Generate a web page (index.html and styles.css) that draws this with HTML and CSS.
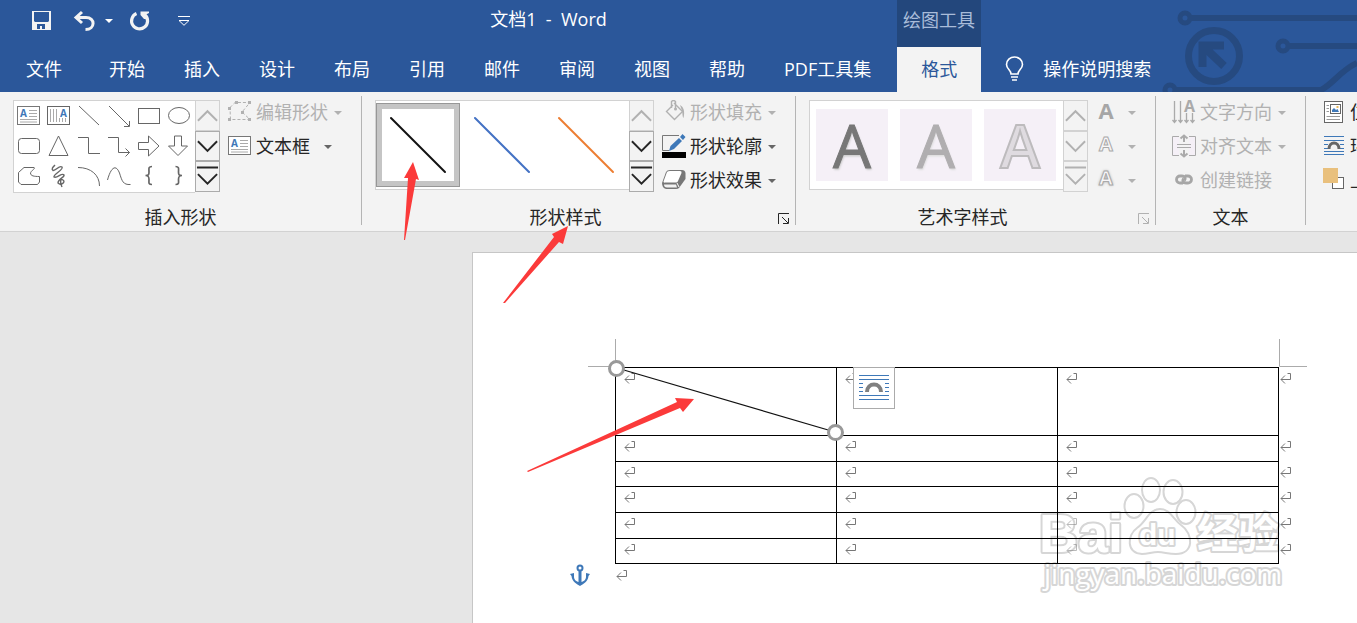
FILE: index.html
```html
<!DOCTYPE html>
<html lang="zh-CN">
<head>
  <meta charset="UTF-8" />
  <meta name="viewport" content="width=device-width, initial-scale=1.0"/>
  <title>文档1 - Word</title>
  <link rel="stylesheet" href="styles.css">
</head>
<body>
  <!-- shared symbols -->
  <svg class="sprite" aria-hidden="true">
    <symbol id="caret" viewBox="0 0 8 4"><path d="M0 0H8L4 4z" fill="currentColor"/></symbol>
    <symbol id="up" viewBox="0 0 24 30"><path d="M2 20L12 10L22 20" fill="none" stroke="currentColor" stroke-width="2"/></symbol>
    <symbol id="down" viewBox="0 0 24 30"><path d="M2 9L12 19L22 9" fill="none" stroke="currentColor" stroke-width="2"/></symbol>
    <symbol id="more" viewBox="0 0 24 30"><path d="M1 5H23M2 12L12 22L22 12" fill="none" stroke="currentColor" stroke-width="2"/></symbol>
    <symbol id="ret" viewBox="0 0 12 12"><path d="M7.500 1.500H10.500V7.500H1M5 3.500L1 7.500L5 11.500" fill="none" stroke="#777"/></symbol>
    <symbol id="launch" viewBox="0 0 12 12"><path d="M.5 11V.5H11M4 4L10 10M10.500 5V10.500H5" fill="none" stroke="currentColor"/></symbol>
    <symbol id="page-lines" viewBox="0 0 24 24">
      <rect x=".5" y="2.500" width="22" height="18" fill="#fff" stroke="#777"/>
      <path d="M12 6.500H20M12 9.500H20M12 12.500H20M3 15.500H20M3 18H20" stroke="#aaa"/>
    </symbol>
  </svg>

  <header class="header">
    <svg class="circuit" viewBox="0 0 200 92" aria-hidden="true">
      <g fill="none" stroke="#264a80" stroke-width="6">
        <circle cx="28" cy="18" r="5" stroke-width="5"/><path d="M33 18H200"/>
        <circle cx="126" cy="46" r="5" stroke-width="5"/><path d="M131 46H200"/>
        <circle cx="57" cy="56" r="25.500" stroke-width="7"/>
        <path d="M45.500 67V45.500H67M47 47L67 66" stroke-width="8"/>
        <circle cx="13" cy="90" r="5" stroke-width="5"/><path d="M18 90H164C176 84 184 70 200 63"/>
      </g>
    </svg>

    <div class="titlebar">
      <div class="quick">
        <button class="quick-btn" aria-label="保存">
          <svg width="20" height="20" viewBox="0 0 20 20"><path fill="#f3f3f3" fill-rule="evenodd" d="M0 0H19V19H0zM2 1V10L3 11H16L17 10V1zM5 13V18H8V15H10V18H13V13z"/></svg>
        </button>
        <button class="quick-btn undo" aria-label="撤消">
          <svg width="24" height="22" viewBox="0 0 24 22"><path d="M10 2L4 7.500L10 13M4 7.500H14C23.500 7.500 23.500 19.500 13.500 19.500" fill="none" stroke="#f3f3f3" stroke-width="3"/></svg>
          <svg class="caret" width="8" height="4"><use href="#caret"/></svg>
        </button>
        <button class="quick-btn redo" aria-label="重复">
          <svg width="22" height="22" viewBox="0 0 22 22"><path d="M7.500 3.500A8 8 0 1 0 16 5" fill="none" stroke="#f3f3f3" stroke-width="3.200"/><path d="M11.500 1.500H20V3L17 4.500V9H15L11.500 5z" fill="#f3f3f3"/></svg>
        </button>
        <button class="quick-btn custom" aria-label="自定义快速访问工具栏">
          <svg width="12" height="10" viewBox="0 0 12 10"><path d="M0 .5H12M1 4.500H11L6 9.300z" fill="none" stroke="#fff"/></svg>
        </button>
      </div>
      <h1 class="title">文档1&nbsp; -&nbsp; Word</h1>
      <div class="context">绘图工具</div>
    </div>

    <nav class="tabs">
      <button class="tab file">文件</button>
      <button class="tab">开始</button>
      <button class="tab">插入</button>
      <button class="tab">设计</button>
      <button class="tab">布局</button>
      <button class="tab">引用</button>
      <button class="tab">邮件</button>
      <button class="tab">审阅</button>
      <button class="tab">视图</button>
      <button class="tab">帮助</button>
      <button class="tab">PDF工具集</button>
      <button class="tab active">格式</button>
      <button class="tell">
        <svg width="20" height="26" viewBox="0 0 20 26"><path d="M6 18C6 14 1.500 13 1.500 8.500A8 7.500 0 0 1 17.500 8.500C17.500 13 13 14 13 18zM6 21H13M7 24H12" fill="none" stroke="#fff" stroke-width="1.600"/></svg>
        操作说明搜索
      </button>
    </nav>
  </header>

  <section class="ribbon">
    <div class="group g-insert">
      <div class="group-body">
        <div class="gallery">
          <div class="shapes">
            <button class="shape" aria-label="文本框"><svg viewBox="0 0 24 24"><use href="#page-lines"/><text x="3" y="13" class="mini-a">A</text></svg></button>
            <button class="shape" aria-label="竖排文本框"><svg viewBox="0 0 24 24"><rect x=".5" y="2.500" width="22" height="18"/><path d="M3.500 5V18M6.500 5V18M9.500 5V18M12.500 14V18M15.500 14V18M18.500 14V18" stroke="#aaa"/><text x="13" y="13" class="mini-a">A</text></svg></button>
            <button class="shape" aria-label="直线"><svg viewBox="0 0 24 24"><path d="M2 2L22 21"/></svg></button>
            <button class="shape" aria-label="箭头"><svg viewBox="0 0 24 24"><path d="M2 2L22 22M22.500 17V22.500H17"/></svg></button>
            <button class="shape" aria-label="矩形"><svg viewBox="0 0 24 24"><rect x="1.500" y="4.500" width="21" height="15"/></svg></button>
            <button class="shape" aria-label="椭圆"><svg viewBox="0 0 24 24"><ellipse cx="12" cy="11.500" rx="10.500" ry="8"/></svg></button>
            <button class="shape" aria-label="圆角矩形"><svg viewBox="0 0 24 24"><rect x="1.500" y="4.500" width="21" height="15" rx="3"/></svg></button>
            <button class="shape" aria-label="三角形"><svg viewBox="0 0 24 24"><path d="M11.500 2L21 21.500H2z"/></svg></button>
            <button class="shape" aria-label="肘形连接符"><svg viewBox="0 0 24 24"><path d="M1 3.500H11.500V19.500H23"/></svg></button>
            <button class="shape" aria-label="肘形箭头"><svg viewBox="0 0 24 24"><path d="M1 3.500H11.500V18.500H22.500M18.500 14.500L22.500 18.500L18.500 22.500"/></svg></button>
            <button class="shape" aria-label="右箭头"><svg viewBox="0 0 24 24"><path d="M1.500 8.500H11.500V2L22 12L11.500 22V15.500H1.500z"/></svg></button>
            <button class="shape" aria-label="下箭头"><svg viewBox="0 0 24 24"><path d="M7.500 2H14.500V12H20.500L11 21.500L1.500 12H7.500z"/></svg></button>
            <button class="shape" aria-label="任意多边形"><svg viewBox="0 0 24 24"><path d="M1.500 8.500L7 3.500H17C19 4.500 14.500 6 13.500 9C13.500 12 17 12.500 22.500 12.500V18L20.500 20.500H4L1.500 18z"/></svg></button>
            <button class="shape" aria-label="自由曲线"><svg viewBox="0 0 24 24"><path d="M8 1C6 3 4 5 6 6.500C9 7 12 1 15 3C17 6 6 10 7 13C10 15 15 8 17 11C18 13 11 15 11 19C14 22 19 18 16 16C13 14 13 19 15 23" stroke-width="1.400"/></svg></button>
            <button class="shape" aria-label="弧形"><svg viewBox="0 0 24 24"><path d="M1 3.500C14 3.500 22.500 11 22.500 22"/></svg></button>
            <button class="shape" aria-label="曲线"><svg viewBox="0 0 24 24"><path d="M.5 16C4 3 9 0 12.500 9C15 17 16 21 23.500 20.500"/></svg></button>
            <button class="shape" aria-label="左大括号"><svg viewBox="0 0 24 24"><path d="M15 2.500C11 2.500 12 5 12 8S11.500 11.500 8.500 11.500C11.500 11.500 12 12.500 12 15.500S11 20.500 15 20.500" stroke-width="1.700"/></svg></button>
            <button class="shape" aria-label="右大括号"><svg viewBox="0 0 24 24"><path d="M8.500 2.500C12.500 2.500 11.500 5 11.500 8S12 11.500 15 11.500C12 11.500 11.500 12.500 11.500 15.500S12.500 20.500 8.500 20.500" stroke-width="1.700"/></svg></button>
          </div>
          <div class="scroll">
            <button class="off" aria-label="上一行"><svg><use href="#up"/></svg></button>
            <button aria-label="下一行"><svg><use href="#down"/></svg></button>
            <button aria-label="其他"><svg><use href="#more"/></svg></button>
          </div>
        </div>
        <div class="commands">
          <button class="cmd" disabled>
            <svg width="24" height="24" viewBox="0 0 24 24"><path d="M2 7.500L7 2.500H22L14 12L22 19.500H2.500z" fill="none" stroke="#b1b1b1" stroke-dasharray="3 2"/><path d="M0 7H3V10H0zM7 1H10V4H7zM20 1H23V4H20zM13 11H16V14H13zM0 18H3V21H0zM20 18H23V21H20z" fill="#b1b1b1"/></svg>
            编辑形状 <svg class="caret"><use href="#caret"/></svg>
          </button>
          <button class="cmd wide">
            <svg width="24" height="24" viewBox="0 0 24 24"><use href="#page-lines"/><text x="3" y="13" class="mini-a">A</text></svg>
            文本框 <svg class="caret"><use href="#caret"/></svg>
          </button>
        </div>
      </div>
      <div class="group-foot"><span>插入形状</span></div>
    </div>

    <div class="group g-style">
      <div class="group-body">
        <div class="gallery">
          <div class="styles">
            <button class="line-style selected black" aria-label="细线 深色"><svg viewBox="0 0 72 72"><path d="M9 9L63 63"/></svg></button>
            <button class="line-style blue" aria-label="细线 蓝色"><svg viewBox="0 0 72 72"><path d="M9 9L63 63"/></svg></button>
            <button class="line-style orange" aria-label="细线 橙色"><svg viewBox="0 0 72 72"><path d="M9 9L63 63"/></svg></button>
          </div>
          <div class="scroll">
            <button class="off" aria-label="上一行"><svg><use href="#up"/></svg></button>
            <button aria-label="下一行"><svg><use href="#down"/></svg></button>
            <button aria-label="其他"><svg><use href="#more"/></svg></button>
          </div>
        </div>
        <div class="commands">
          <button class="cmd" disabled>
            <svg width="24" height="24" viewBox="0 0 24 24"><path d="M12 3L20.500 11.500L12.500 19.500L4.500 11.500L11 5M9.500 8V1.500Q11.500 -.5 13.500 1.500V9" fill="none" stroke="#b1b1b1" stroke-width="1.400"/><path d="M18 5C22 7 23 12 21.500 18C20 16 21 12 19 8z" fill="#b1b1b1"/><circle cx="13.500" cy="9" r="1.500" fill="#b1b1b1"/></svg>
            形状填充 <svg class="caret"><use href="#caret"/></svg>
          </button>
          <button class="cmd">
            <svg width="24" height="24" viewBox="0 0 24 24"><path d="M17 1.500H.5V16.500H7" fill="none" stroke="#777"/><path d="M0 18H24V24H0z"/><path d="M7 17L8.500 12L17 4L20 7L12 15zM18 3L20.500 0L23.500 3L21 6z" fill="#3e78b8"/></svg>
            形状轮廓 <svg class="caret"><use href="#caret"/></svg>
          </button>
          <button class="cmd">
            <svg width="24" height="24" viewBox="0 0 24 24"><path d="M0 15L4 4Q5 2 8 2H20Q23 2 23.500 5V11L17 20Q16 21 14 21H4Q0 20 0 15z" fill="#777"/><path d="M1.500 13.500L5 4Q6 3 8 3H18Q20 3 19.500 5L16 13Q15.500 14.500 14 14.500H3Q1.500 15 1.500 13.500z" fill="#fff"/><path d="M2 16.500H14L15 19.500H5Q2 19.500 2 16.500z" fill="#f3f3f3"/><path d="M15 15L17 19" stroke="#fff"/></svg>
            形状效果 <svg class="caret"><use href="#caret"/></svg>
          </button>
        </div>
      </div>
      <div class="group-foot"><span>形状样式</span><button class="launcher" aria-label="设置形状格式"><svg width="12" height="12"><use href="#launch"/></svg></button></div>
    </div>

    <div class="group g-art">
      <div class="group-body">
        <div class="gallery">
          <div class="arts">
            <button class="art art-dark">A</button>
            <button class="art art-light">A</button>
            <button class="art art-outline">A</button>
          </div>
          <div class="scroll">
            <button class="off" aria-label="上一行"><svg><use href="#up"/></svg></button>
            <button class="off" aria-label="下一行"><svg><use href="#down"/></svg></button>
            <button class="off" aria-label="其他"><svg><use href="#more"/></svg></button>
          </div>
        </div>
        <div class="commands">
          <button class="cmd letter" disabled aria-label="文本填充"><span class="a-fill">A</span><svg class="caret"><use href="#caret"/></svg></button>
          <button class="cmd letter" disabled aria-label="文本轮廓"><span class="a-line">A</span><svg class="caret"><use href="#caret"/></svg></button>
          <button class="cmd letter" disabled aria-label="文本效果"><span class="a-glow">A</span><svg class="caret"><use href="#caret"/></svg></button>
        </div>
      </div>
      <div class="group-foot"><span>艺术字样式</span><button class="launcher off" aria-label="设置文本效果格式"><svg width="12" height="12"><use href="#launch"/></svg></button></div>
    </div>

    <div class="group g-text">
      <div class="group-body">
        <div class="commands">
          <button class="cmd" disabled>
            <svg class="dir" width="24" height="24" viewBox="0 0 24 24"><path d="M2.500 1V22M8.500 1V22M14.500 13V22M20.500 13V22M.5 20L2.500 22.500L4.500 20M6.500 20L8.500 22.500L10.500 20M12.500 20L14.500 22.500L16.500 20M18.500 20L20.500 22.500L22.500 20" fill="none" stroke="#aaa" stroke-width="1.300"/><text x="12" y="12" class="dir-a">A</text></svg>
            文字方向 <svg class="caret"><use href="#caret"/></svg>
          </button>
          <button class="cmd" disabled>
            <svg width="24" height="24" viewBox="0 0 24 24"><path d="M7 2.500H.5V21.500H7M17 2.500H23.500V21.500H17" fill="#f5f0f7" stroke="#aaa"/><path d="M5 10.500H19M5 13.500H19" stroke="#aaa"/><path d="M12 8V2M12 16V22M8.500 4.500L12 1.500L15.500 4.500M8.500 19.500L12 22.500L15.500 19.500" fill="none" stroke="#aaa" stroke-width="2"/></svg>
            对齐文本 <svg class="caret"><use href="#caret"/></svg>
          </button>
          <button class="cmd" disabled>
            <svg width="24" height="24" viewBox="0 0 24 24"><path d="M11 15H8A3.500 3.500 0 0 1 8 8H10C13 8 14 10.500 12.500 12.500M13 8H16A3.500 3.500 0 0 1 16 15H14C11 15 10 12.500 11.500 10.500" fill="none" stroke="#a6a6a6" stroke-width="2.800"/></svg>
            创建链接
          </button>
        </div>
      </div>
      <div class="group-foot"><span>文本</span></div>
    </div>

    <div class="group g-arrange">
      <div class="group-body">
        <div class="commands">
          <button class="cmd">
            <svg width="24" height="24" viewBox="0 0 24 24"><rect x="2.500" y="1.500" width="18" height="21" fill="#fff" stroke="#666"/><rect x="8.500" y="4.500" width="10" height="9" fill="#fff" stroke="#666"/><path d="M10 12V10L12 8L14 10L15.500 9L17 12z" fill="#3e78b8"/><path d="M14.500 6H16.500V8H14.500z" fill="#e9b95b"/><path d="M4.500 5.500H7M4.500 8.500H7M4.500 11.500H7M4.500 16.500H18M4.500 19.500H18" stroke="#999"/></svg>
            位置
          </button>
          <button class="cmd">
            <svg width="24" height="24" viewBox="0 0 24 24"><path d="M2 2.500H22M2 6.500H22M2 10.500H6M18 10.500H22M2 14.500H6M18 14.500H22M2 17.500H22M2 20.500H22" stroke="#3e78b8"/><path d="M7 15C7 7 17 7 17 15" fill="none" stroke="#666" stroke-width="3"/></svg>
            环绕文字
          </button>
          <button class="cmd">
            <svg width="24" height="24" viewBox="0 0 24 24"><rect x="10.500" y="9.500" width="11" height="11" fill="#fff" stroke="#666"/><path d="M1 0H16V15H1z" fill="#e9c07d"/></svg>
            上移一层
          </button>
        </div>
      </div>
    </div>
  </section>

  <main class="workspace">
    <div class="page">
      <svg class="watermark" viewBox="0 0 250 125" aria-hidden="true">
        <ellipse cx="98" cy="32" rx="9.500" ry="12"/>
        <ellipse cx="115" cy="16" rx="9" ry="12"/>
        <ellipse cx="137" cy="18" rx="9.500" ry="12"/>
        <ellipse cx="150" cy="38" rx="9.500" ry="12"/>
        <path d="M124 35C134 35 137 45 145 51C158 60 158 80 140 80C132 80 128 78 122 78C116 78 112 80 106 80C90 79 91 61 101 54C110 48 113 35 124 35z"/>
        <text x="3" y="78" class="wm-big">Bai</text>
        <text x="103" y="71" class="wm-du">du</text>
        <text x="161" y="74" class="wm-cn">经验</text>
        <text x="8" y="110" class="wm-url">jingyan.baidu.com</text>
      </svg>

      <div class="table-wrap">
        <table class="grid">
          <tr class="tall"><td><svg class="ret"><use href="#ret"/></svg></td><td><svg class="ret"><use href="#ret"/></svg></td><td><svg class="ret"><use href="#ret"/></svg></td><td class="end"><svg class="ret"><use href="#ret"/></svg></td></tr>
          <tr><td><svg class="ret"><use href="#ret"/></svg></td><td><svg class="ret"><use href="#ret"/></svg></td><td><svg class="ret"><use href="#ret"/></svg></td><td class="end"><svg class="ret"><use href="#ret"/></svg></td></tr>
          <tr class="short"><td><svg class="ret"><use href="#ret"/></svg></td><td><svg class="ret"><use href="#ret"/></svg></td><td><svg class="ret"><use href="#ret"/></svg></td><td class="end"><svg class="ret"><use href="#ret"/></svg></td></tr>
          <tr><td><svg class="ret"><use href="#ret"/></svg></td><td><svg class="ret"><use href="#ret"/></svg></td><td><svg class="ret"><use href="#ret"/></svg></td><td class="end"><svg class="ret"><use href="#ret"/></svg></td></tr>
          <tr><td><svg class="ret"><use href="#ret"/></svg></td><td><svg class="ret"><use href="#ret"/></svg></td><td><svg class="ret faded"><use href="#ret"/></svg></td><td class="end"><svg class="ret"><use href="#ret"/></svg></td></tr>
          <tr class="short"><td><svg class="ret"><use href="#ret"/></svg></td><td><svg class="ret"><use href="#ret"/></svg></td><td><svg class="ret faded"><use href="#ret"/></svg></td><td class="end"><svg class="ret"><use href="#ret"/></svg></td></tr>
        </table>

        <!-- margin corners and the selected diagonal line -->
        <svg class="drawing" viewBox="0 0 720 110" aria-hidden="true">
          <path d="M27.500 0V27.500H0M691.500 0V27.500H719" fill="none" stroke="#ababab"/>
          <path d="M29 29L247 93" stroke="#111" stroke-width="1.300"/>
          <circle cx="28.500" cy="29.500" r="7" fill="#fff" stroke="#999" stroke-width="3"/>
          <circle cx="247.500" cy="93.500" r="7" fill="#fff" stroke="#999" stroke-width="3"/>
        </svg>
        <button class="layout-options" aria-label="布局选项">
          <svg width="30" height="28" viewBox="0 0 30 28"><path d="M0 1.500H30M0 5.500H30M0 9.500H4M26 9.500H30M0 13.500H4M26 13.500H30M0 17.500H4M26 17.500H30M0 21.500H30M0 25.500H30" stroke="#3e78b8"/><path d="M8 18C8 8 22 8 22 18" fill="none" stroke="#808080" stroke-width="4"/></svg>
        </button>
      </div>
      <div class="last-line">
        <svg class="anchor" width="20" height="22" viewBox="0 0 20 22"><circle cx="10" cy="4" r="2.500" fill="none" stroke="#3e78b8" stroke-width="2"/><path d="M8.500 6H11.500V18H8.500z" fill="#3e78b8"/><path d="M0 10L4 9V13C4 16 7 18 10 18S16 16 16 13V9L20 10L18.500 12C18 18 13 20 10 22C7 20 2 18 1.500 12z" fill="#3e78b8"/></svg>
        <svg class="ret"><use href="#ret"/></svg>
      </div>
    </div>
  </main>

  <!-- tutorial arrows -->
  <svg class="arrows" viewBox="0 0 700 480" aria-hidden="true">
    <path d="M413 162L419 180L416 179L405 240H404L408 178L404 178z"/>
    <path d="M568 226L563 244L559 242L505 303L503 303L554 237L552 234z"/>
    <path d="M694 399L683 412L680 408L528 472L527 471L677 402L675 398z"/>
  </svg>
</body>
</html>
```
FILE: styles.css
```css
* {
  box-sizing: border-box;
}

body {
  margin: 0;
  position: relative;
  display: flex;
  flex-direction: column;
  height: 100vh;
  overflow: hidden;
  background: #e6e6e6;
  color: #262626;
  font-family: "Open Sans", "Noto Sans CJK SC", sans-serif;
  font-size: 18px;
  line-height: 24px;
}

button {
  margin: 0;
  padding: 0;
  border: none;
  background: none;
  color: inherit;
  font: inherit;
  white-space: nowrap;
}

svg {
  display: block;
  flex: none;
}

.sprite {
  position: absolute;
  width: 0;
  height: 0;
}

.mini-a {
  font-size: 10px;
  font-weight: bold;
  fill: #3e78b8;
  stroke: none;
}

.dir {
  overflow: visible;
}

.dir-a {
  font-size: 16px;
  font-weight: bold;
  fill: #aaa;
}

.caret {
  width: 8px;
  height: 4px;
}

/* header */
.header {
  position: relative;
  flex: none;
  background: #2b579a;
  color: #fff;
}

.circuit {
  position: absolute;
  top: 0;
  right: 0;
  width: 200px;
  height: 92px;
}

.titlebar {
  display: grid;
  grid-template-columns: 200px 697px 84px;
  height: 47px;
}

.quick {
  display: flex;
  align-items: center;
  padding-left: 32px;
  height: 42px;
}

.quick-btn {
  display: flex;
  align-items: center;
}

.undo {
  gap: 9px;
  margin-left: 20px;
}

.redo {
  margin-left: 16px;
}

.custom {
  margin-left: 27px;
}

.title {
  margin: 0;
  font-size: 18px;
  font-weight: normal;
  line-height: 38px;
  text-align: center;
}

.context {
  background: #23477c;
  color: #a9bcd9;
  line-height: 40px;
  text-align: center;
}

.tabs {
  display: flex;
  height: 45px;
}

.tab {
  padding: 0 19px 2px;
  margin-right: 1px;
}

.file {
  width: 89px;
  padding-left: 26px;
  text-align: left;
}

.active {
  width: 84px;
  margin: 0 0 0 6px;
  background: #f3f3f3;
  color: #2b579a;
}

.tell {
  display: flex;
  align-items: center;
  gap: 18px;
  padding: 0 0 2px 24px;
}

/* ribbon */
.ribbon {
  display: flex;
  flex: none;
  height: 140px;
  padding: 4px 0 6px;
  overflow: hidden;
  border-bottom: 1px solid #d2d2d2;
  background: #f3f3f3;
}

.group {
  display: flex;
  flex: none;
  flex-direction: column;
  justify-content: space-between;
  border-right: 1px solid #b4b4b4;
}

.g-insert {
  width: 362px;
  padding-left: 13px;
}

.g-style {
  width: 434px;
  padding-left: 13px;
}

.g-art {
  width: 360px;
  padding-left: 13px;
}

.g-text {
  width: 150px;
  padding-left: 16px;
}

.g-arrange {
  padding-left: 16px;
  border-right: none;
}

.group-body {
  display: flex;
  gap: 8px;
}

.group-foot {
  display: flex;
  align-items: center;
  height: 16px;
  margin-left: -13px;
}

.g-text .group-foot {
  margin-left: -16px;
}

.group-foot span {
  flex: 1;
  text-align: center;
}

.launcher {
  width: 26px;
  padding: 4px 0 0 9px;
}

.launcher.off {
  color: #b1b1b1;
}

.gallery {
  display: flex;
  align-self: flex-start;
  margin-top: 4px;
}

.shapes {
  display: grid;
  grid-template-columns: repeat(6, 30px);
  grid-template-rows: repeat(3, 30px);
  padding: 0 1px 1px 0;
  border: 1px solid #d2d2d2;
  border-right: none;
  background: #fff;
}

.shape {
  display: flex;
  align-items: center;
  justify-content: center;
}

.shape svg {
  width: 24px;
  height: 24px;
  fill: none;
  stroke: #666;
}

.scroll {
  display: flex;
  flex-direction: column;
  width: 25px;
  height: 92px;
}

.scroll button {
  flex: 1;
  border: 1px solid #ababab;
  overflow: hidden;
}

.scroll .off {
  border-color: #d2d2d2;
  color: #b1b1b1;
}

.scroll svg {
  width: 23px;
  height: 30px;
}

.commands {
  display: flex;
  flex-direction: column;
  align-items: flex-start;
}

.cmd {
  display: flex;
  align-items: center;
  gap: 4px;
  height: 34px;
  padding-bottom: 2px;
}

.cmd .caret {
  margin: 2px 0 0 2px;
  color: #666;
}

.cmd.wide .caret {
  margin-left: 10px;
}

.cmd:disabled,
.cmd:disabled .caret {
  color: #b1b1b1;
}

.styles {
  display: flex;
  height: 90px;
  padding: 2px 1px 0 0;
  border: 1px solid #d2d2d2;
  border-right: none;
  background: #fff;
}

.line-style {
  width: 84px;
  height: 84px;
  padding: 6px;
}

.line-style.selected {
  padding: 0;
  border: 1px solid #979797;
  background: #fff;
  box-shadow: inset 0 0 0 5px #c5c5c5;
}

.line-style svg {
  width: 72px;
  height: 72px;
  margin: auto;
  fill: none;
  stroke-width: 2;
  stroke-linecap: round;
}

.black svg {
  stroke: #111;
}

.blue svg {
  stroke: #4472c4;
}

.orange svg {
  stroke: #ed7d31;
}

.arts {
  display: flex;
  gap: 12px;
  height: 90px;
  padding: 8px 7px 8px 6px;
  border: 1px solid #d2d2d2;
  border-right: none;
  background: #fff;
}

.art {
  width: 72px;
  height: 72px;
  background: #f5f0f7;
  font-size: 60px;
  line-height: 72px;
}

.art-dark {
  color: #777;
  -webkit-text-stroke: 1px #777;
  text-shadow: 1px 2px 2px #ccc;
}

.art-light {
  color: #b0aeb0;
  -webkit-text-stroke: 1px #b0aeb0;
  text-shadow: 1px 2px 2px #ddd;
}

.art-outline {
  color: #dfdbe0;
  font-weight: 600;
  -webkit-text-stroke: 2px #bdbbbd;
}

.letter {
  font-size: 22px;
  font-weight: bold;
}

.letter span {
  width: 20px;
  padding-bottom: 5px;
  text-align: center;
}

.letter .caret {
  margin-left: 8px;
}

.a-fill {
  color: #a6a6a6;
}

.a-line,
.a-glow {
  color: #f8f6f8;
  font-size: 20px;
  -webkit-text-stroke: 1px #aaa;
}

.a-glow {
  text-shadow: 0 0 3px #999;
}

/* document */
.workspace {
  display: flex;
  flex: 1;
  padding: 20px 0 0 472px;
  overflow: hidden;
}

.page {
  position: relative;
  flex: 1;
  padding: 114px 0 0 142px;
  border: 1px solid #c6c6c6;
  border-width: 1px 0 0 1px;
  background: #fff;
}

.table-wrap {
  position: relative;
  width: 684px;
}

.grid {
  width: 684px;
  border-collapse: collapse;
  table-layout: fixed;
}

.grid td {
  width: 221px;
  height: 26px;
  padding: 4px 0 0 8px;
  border: 1px solid #000;
  vertical-align: top;
}

.grid .tall td {
  height: 68px;
}

.grid .short td {
  height: 25px;
}

.grid td.end {
  width: 20px;
  padding-left: 1px;
  border-width: 0 0 0 1px;
}

.ret {
  width: 12px;
  height: 12px;
}

.faded {
  opacity: 0.5;
}

.drawing {
  position: absolute;
  top: -28px;
  left: -27px;
  width: 720px;
  height: 110px;
}

.layout-options {
  position: absolute;
  top: 0;
  left: 238px;
  display: flex;
  align-items: center;
  justify-content: center;
  width: 42px;
  height: 42px;
  border: 1px solid #ababab;
  background: #fff;
}

.last-line {
  display: flex;
  align-items: center;
  gap: 26px;
  margin-left: -45px;
}

/* sits under the table lines */
.watermark {
  position: absolute;
  top: 221px;
  left: 563px;
  width: 250px;
  height: 125px;
  fill: #fff;
  stroke: #d6d6d6;
  stroke-width: 2;
}

.watermark text {
  stroke-width: 4;
  stroke-linejoin: round;
  paint-order: stroke;
}

.wm-big {
  font: bold 54px "Liberation Sans", sans-serif;
}

.wm-du {
  font: bold 30px "Liberation Sans", sans-serif;
}

.wm-cn {
  font: bold 41px "Noto Sans CJK SC", sans-serif;
}

.wm-url {
  font: 28px "Open Sans", sans-serif;
}

.arrows {
  position: absolute;
  top: 0;
  left: 0;
  width: 700px;
  height: 480px;
  fill: #fb3a3a;
  pointer-events: none;
}
```
